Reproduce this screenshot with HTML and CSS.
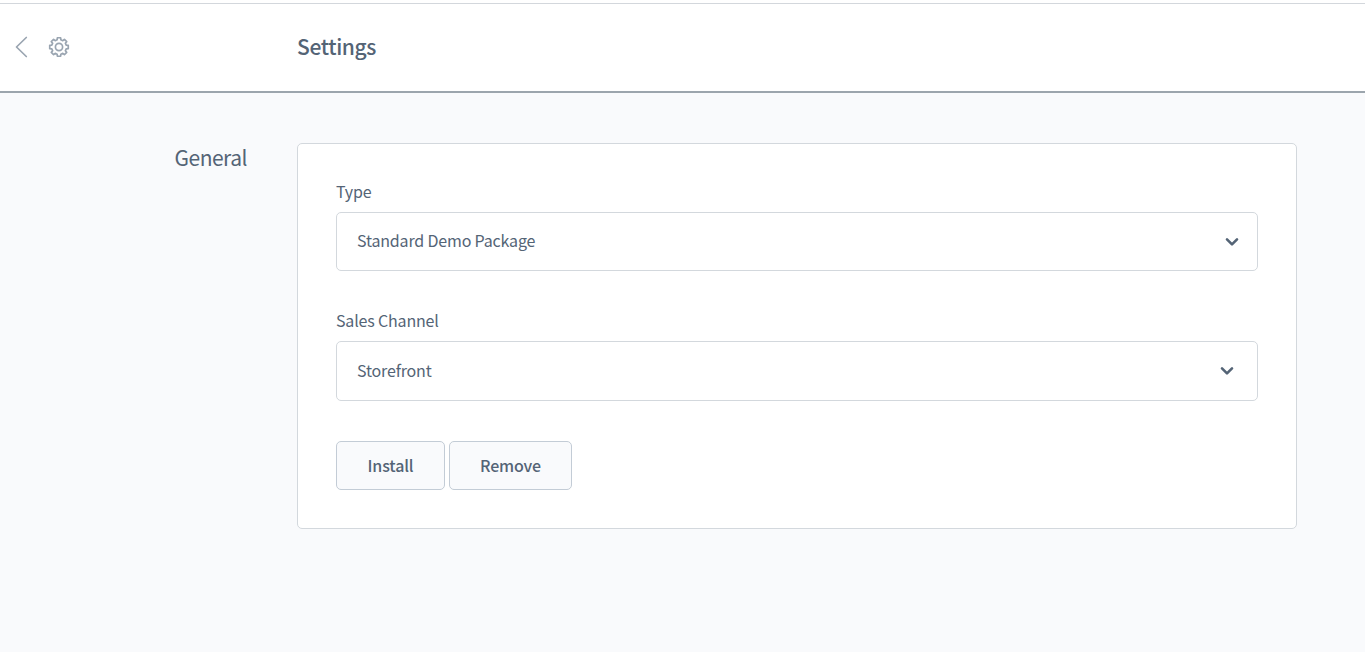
FILE: index.html
```html
<!DOCTYPE html>
<html lang="en">
<head>
<meta charset="utf-8">
<title>Settings</title>
<link rel="stylesheet" href="styles.css">
</head>
<body>
<header class="header">
  <nav class="nav">
    <svg class="back" viewBox="0 0 14 22"><path d="M12.3 1.5 2.5 11l9.8 9.5"/></svg>
    <svg class="gear" viewBox="-11 -11 22 22"><path d="M-1.63-9.26H1.63L1.9-7.2 3.81-6.34 5.39-7.7 7.7-5.39 6.34-3.81 7.2-1.9 9.26-1.63V1.63L7.2 1.9 6.34 3.81 7.7 5.39 5.39 7.7 3.81 6.34 1.9 7.2 1.63 9.26H-1.63L-1.9 7.2-3.81 6.34-5.39 7.7-7.7 5.39-6.34 3.81-7.2 1.9-9.26 1.63V-1.63L-7.2-1.9-6.34-3.81-7.7-5.39-5.39-7.7-3.81-6.34-1.9-7.2Z"/><circle r="3.6"/></svg>
  </nav>
  <h1 class="title">Settings</h1>
</header>
<main class="content">
  <h2 class="section">General</h2>
  <form class="card">
    <div class="label">Type</div>
    <div class="select select-type">Standard Demo Package
      <svg class="chevron" viewBox="0 0 14 10"><path d="M2 2.4 7 7.4l5-5"/></svg>
    </div>
    <div class="label label-channel">Sales Channel</div>
    <div class="select select-channel">Storefront
      <svg class="chevron" viewBox="0 0 14 10"><path d="M2 2.4 7 7.4l5-5"/></svg>
    </div>
    <div class="actions">
      <button class="button install" type="button">Install</button>
      <button class="button remove" type="button">Remove</button>
    </div>
  </form>
</main>
</body>
</html>
```
FILE: styles.css
```css
* { box-sizing: border-box; }
body {
  margin: 0;
  height: 652px;
  overflow: hidden;
  background: #f9fafc;
  color: #546476;
  font-family: "Noto Sans CJK SC", "Noto Sans", sans-serif;
  font-size: 16px;
  letter-spacing: -0.17px;
}
.header {
  display: flex;
  height: 90px;
  margin-top: 3px;
  border-top: 1px solid #d3d7dc;
  border-bottom: 2px solid #9ca5ad;
  background: #fff;
  box-shadow: 0 -3px #fff;
}
.nav {
  display: flex;
  align-items: center;
  gap: 20px;
  width: 297px;
  padding: 0 0 2px 14px;
}
.nav svg {
  fill: none;
  stroke: #9aa5b1;
  stroke-width: 1.7;
  stroke-linecap: round;
  stroke-linejoin: round;
}
.back { width: 14px; height: 22px; }
.gear { width: 22px; height: 22px; }
.title {
  margin: 0;
  font-size: 21px;
  font-weight: 500;
  letter-spacing: -0.36px;
  line-height: 84px;
}
.content {
  display: grid;
  grid-template-columns: 247px 1000px;
  column-gap: 50px;
  align-items: start;
  padding-top: 50px;
}
.section {
  margin: 0;
  font-size: 21px;
  font-weight: 400;
  letter-spacing: -0.5px;
  line-height: 28px;
  text-align: right;
}
.card {
  height: 386px;
  padding: 37px 38px;
  border: 1px solid #d3d8dd;
  border-radius: 5px;
  background: #fff;
}
.label { height: 31px; line-height: 20px; }
.label-channel { margin-top: 39px; }
.select {
  display: flex;
  align-items: center;
  justify-content: space-between;
  height: 59px;
  padding: 0 18px 2px 20px;
  border: 1px solid #d3d8dd;
  border-radius: 5px;
  line-height: 20px;
}
.select-type { padding-bottom: 3px; }
.select-channel { height: 60px; padding-right: 23px; }
.chevron {
  width: 14px;
  height: 10px;
  margin-top: 2px;
  fill: none;
  stroke: #546476;
  stroke-width: 2.6;
  stroke-linecap: round;
  stroke-linejoin: round;
}
.select-type .chevron { margin-top: 3px; }
.actions { display: flex; gap: 4px; margin-top: 40px; }
.button {
  height: 49px;
  padding: 0 0 2px;
  border: 1px solid #c3ccd6;
  border-radius: 5px;
  background: #f9fafc;
  color: #546476;
  font: 500 16px "Noto Sans CJK SC", "Noto Sans", sans-serif;
  letter-spacing: -0.15px;
}
.install { width: 109px; }
.remove { width: 123px; }
```
